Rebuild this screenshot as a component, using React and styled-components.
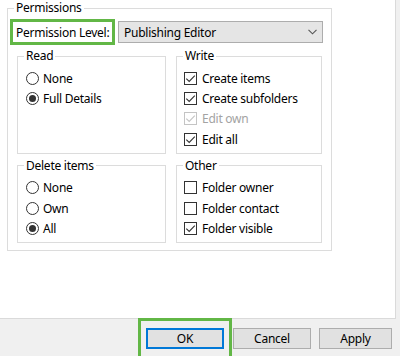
import React from "react";
import styled, { createGlobalStyle } from "styled-components";

const GREEN = "#62b746";

const GlobalStyle = createGlobalStyle`
  * { box-sizing: border-box; }
  html, body { margin: 0; padding: 0; }
  body {
    width: 400px;
    height: 356px;
    overflow: hidden;
    background: #f0f0f0;
    font-family: "Noto Sans", "Segoe UI", sans-serif;
    font-size: 12px;
    letter-spacing: -0.25px;
    color: #000;
  }
`;

export default function App() {
  return (
    <>
      <GlobalStyle />
      <Page>
        <Panel>
          <Outer>
            <Caption $offset={4}>Permissions</Caption>
            <LevelRow>
              <Highlight>Permission Level:</Highlight>
              <Select>
                <span>Publishing Editor</span>
                <svg width="9" height="6" viewBox="0 0 9 6">
                  <path d="M0.5 0.8 L4.5 4.8 L8.5 0.8" fill="none" stroke="#555" strokeWidth="1.1" />
                </svg>
              </Select>
            </LevelRow>
            <Groups>
              <Group>
                <Caption>Read</Caption>
                <Items $inset={2}>
                  <Option type="radio" label="None" />
                  <Option type="radio" label="Full Details" checked />
                </Items>
              </Group>
              <Group>
                <Caption>Write</Caption>
                <Items $inset={1}>
                  <Option type="check" label="Create items" checked />
                  <Option type="check" label="Create subfolders" checked />
                  <Option type="check" label="Edit own" checked disabled />
                  <Option type="check" label="Edit all" checked />
                </Items>
              </Group>
              <Group>
                <Caption>Delete items</Caption>
                <Items $inset={2}>
                  <Option type="radio" label="None" />
                  <Option type="radio" label="Own" />
                  <Option type="radio" label="All" checked />
                </Items>
              </Group>
              <Group>
                <Caption>Other</Caption>
                <Items $inset={1}>
                  <Option type="check" label="Folder owner" />
                  <Option type="check" label="Folder contact" />
                  <Option type="check" label="Folder visible" checked />
                </Items>
              </Group>
            </Groups>
          </Outer>
        </Panel>
        <ButtonBar>
          <Callout>
            <Button $primary $width={78}>OK</Button>
          </Callout>
          <Button $width={78} $gap={1}>Cancel</Button>
          <Button $width={73} $gap={8}>Apply</Button>
        </ButtonBar>
      </Page>
    </>
  );
}

function Option({ type, label, checked, disabled }) {
  return (
    <Row $disabled={disabled}>
      {type === "radio" ? (
        <Radio $checked={checked} />
      ) : (
        <Check $disabled={disabled}>
          {checked && (
            <svg width="11" height="11" viewBox="0 0 11 11">
              <path d="M1.3 5.6 L4.2 8.5 L9.8 2.6" fill="none" stroke="currentColor" strokeWidth="1.1" />
            </svg>
          )}
        </Check>
      )}
      <span>{label}</span>
    </Row>
  );
}

const Page = styled.div`
  width: 400px;
  height: 356px;
  display: flex;
  flex-direction: column;
`;
const Panel = styled.div`
  width: 396px;
  height: 319px;
  flex: none;
  background: #fff;
  border-right: 1px solid #dadada;
  border-bottom: 1px solid #dadada;
`;
const Fieldset = styled.fieldset`
  margin: 0;
  min-width: 0;
  border: 1px solid #dcdcdc;
`;
const Outer = styled(Fieldset)`
  width: 325px;
  margin-left: 7px;
  padding: 0 2px 7px;
`;
const Group = styled(Fieldset)`
  padding: 0 6px 3px;
`;
const Caption = styled.legend`
  padding: 0 2px;
  margin-left: ${(p) => p.$offset || 0}px;
  line-height: 16px;
  font-size: 12px;
`;
const LevelRow = styled.div`
  display: flex;
  align-items: center;
  margin: 3px 0;
`;
const Highlight = styled.div`
  width: 105px;
  height: 26px;
  padding: 0 3px;
  border: 3px solid ${GREEN};
  display: flex;
  align-items: center;
  white-space: nowrap;
`;
const Select = styled.div`
  width: 205px;
  height: 22px;
  margin-left: 3px;
  padding: 0 5px 0 5px;
  background: #e5e5e5;
  border: 1px solid #adadad;
  display: flex;
  align-items: center;
  justify-content: space-between;
`;
const Groups = styled.div`
  display: grid;
  grid-template-columns: 149px 146px;
  column-gap: 10px;
  row-gap: 4px;
  margin-left: 7px;
`;
const Items = styled.div`
  padding-top: 4px;
  padding-left: ${(p) => p.$inset}px;
`;
const Row = styled.div`
  height: 20.4px;
  display: flex;
  align-items: center;
  gap: 4px;
  white-space: nowrap;
  color: ${(p) => (p.$disabled ? "#a3a3a3" : "#000")};
`;
const Radio = styled.span`
  position: relative;
  width: 13px;
  height: 13px;
  flex: none;
  border: 1px solid #333;
  border-radius: 50%;
  background: #fff;
  &::after {
    content: "";
    display: ${(p) => (p.$checked ? "block" : "none")};
    position: absolute;
    left: 2px;
    top: 2px;
    width: 7px;
    height: 7px;
    border-radius: 50%;
    background: #333;
  }
`;
const Check = styled.span`
  width: 13px;
  height: 13px;
  flex: none;
  border: 1px solid ${(p) => (p.$disabled ? "#c4c4c4" : "#333")};
  color: ${(p) => (p.$disabled ? "#c4c4c4" : "#333")};
  background: #fff;
  display: flex;
  align-items: center;
  justify-content: center;
  margin-right: 1px;
`;
const ButtonBar = styled.div`
  flex: 1;
  display: flex;
  justify-content: flex-end;
  align-items: flex-start;
  padding-right: 8px;
`;
const Callout = styled.div`
  margin-top: -1px;
  padding: 7px 5px;
  border: 3px solid ${GREEN};
`;
const Button = styled.button`
  width: ${(p) => p.$width}px;
  height: 21px;
  margin: ${(p) => (p.$primary ? 0 : 9)}px 0 0 ${(p) => p.$gap || 0}px;
  padding: 0;
  background: #e1e1e1;
  border: ${(p) => (p.$primary ? "2px solid #0078d7" : "1px solid #adadad")};
  font-family: inherit;
  font-size: 12px;
  letter-spacing: inherit;
  color: #000;
  line-height: 1;
`;
